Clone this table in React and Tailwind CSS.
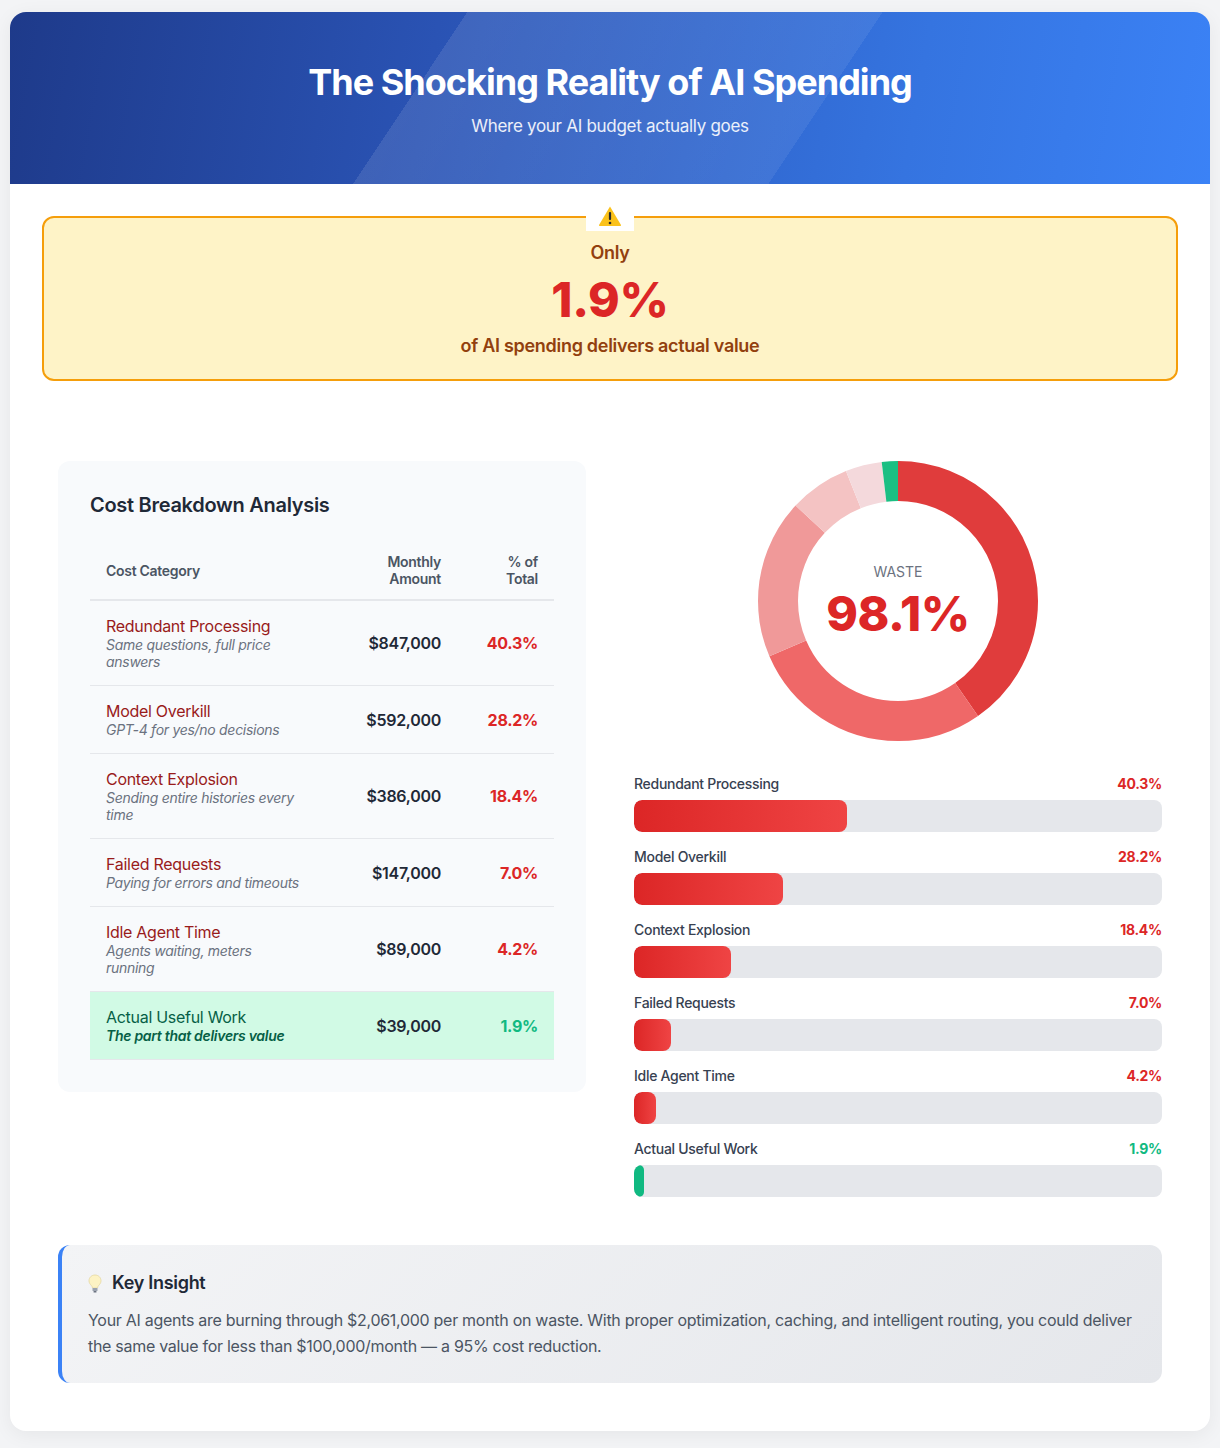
import React from "react";

const rows = [
  { name: "Redundant Processing", desc: "Same questions, full price answers", amount: "$847,000", pct: "40.3%" },
  { name: "Model Overkill", desc: "GPT-4 for yes/no decisions", amount: "$592,000", pct: "28.2%" },
  { name: "Context Explosion", desc: "Sending entire histories every time", amount: "$386,000", pct: "18.4%" },
  { name: "Failed Requests", desc: "Paying for errors and timeouts", amount: "$147,000", pct: "7.0%" },
  { name: "Idle Agent Time", desc: "Agents waiting, meters running", amount: "$89,000", pct: "4.2%" },
];

const bars = [
  { label: "Redundant Processing", value: 40.3 },
  { label: "Model Overkill", value: 28.2 },
  { label: "Context Explosion", value: 18.4 },
  { label: "Failed Requests", value: 7.0 },
  { label: "Idle Agent Time", value: 4.2 },
  { label: "Actual Useful Work", value: 1.9, good: true },
];

const slices = [
  { value: 40.3, color: "#e03c3c" },
  { value: 28.2, color: "#ef6868" },
  { value: 18.4, color: "#f09999" },
  { value: 7.0, color: "#f4c3c3" },
  { value: 4.2, color: "#f4d9dc" },
  { value: 1.9, color: "#1bbf83" },
];

function Donut() {
  const r = 120;
  const c = 2 * Math.PI * r;
  let offset = 0;
  return (
    <div className="relative w-[280px] h-[280px]">
      <svg width="280" height="280" viewBox="0 0 280 280" className="-rotate-90">
        {slices.map((s, i) => {
          const len = (s.value / 100) * c;
          const el = (
            <circle
              key={i}
              cx="140"
              cy="140"
              r={r}
              fill="none"
              stroke={s.color}
              strokeWidth="40"
              strokeDasharray={`${len} ${c - len}`}
              strokeDashoffset={-offset}
            />
          );
          offset += len;
          return el;
        })}
      </svg>
      <div className="absolute inset-0 flex flex-col items-center justify-center">
        <span className="text-sm uppercase text-[#6b7280] leading-5 mt-[2px] tracking-normal">Waste</span>
        <span className="text-5xl font-extrabold text-[#dc2626] leading-[56px] mt-[4px] tracking-[-0.01em]">98.1%</span>
      </div>
    </div>
  );
}

function Warning() {
  return (
    <svg width="24" height="22" viewBox="0 0 24 22">
      <path d="M12 1.5 L23 20 Q23.3 21 22.2 21 L1.8 21 Q0.7 21 1 20 Z" fill="#fbc21a" />
      <rect x="10.9" y="7" width="2.2" height="8" rx="1" fill="#2b2b2b" />
      <circle cx="12" cy="18" r="1.3" fill="#2b2b2b" />
    </svg>
  );
}

function Bulb() {
  return (
    <svg width="14" height="19" viewBox="0 0 14 19">
      <path
        d="M7 1 C3.5 1 1 3.6 1 6.8 C1 9 2.3 10.4 3.4 11.6 C4.2 12.5 4.5 13.3 4.5 14 L9.5 14 C9.5 13.3 9.8 12.5 10.6 11.6 C11.7 10.4 13 9 13 6.8 C13 3.6 10.5 1 7 1 Z"
        fill="#fdf3c4"
        stroke="#e5d7a0"
        strokeWidth="0.8"
      />
      <rect x="4.5" y="14" width="5" height="3" rx="0.6" fill="#9ca3af" />
      <rect x="5.5" y="17" width="3" height="1.4" rx="0.5" fill="#6b7280" />
    </svg>
  );
}

export default function App() {
  return (
    <div className="min-h-screen bg-[#f3f4f6] px-[10px] pt-3 pb-4 font-['Inter',sans-serif] tracking-[-0.018em]">
      <div className="bg-white rounded-2xl shadow-[0_4px_20px_rgba(0,0,0,0.06)] overflow-hidden">
        {/* header */}
        <div className="relative bg-[linear-gradient(100deg,#1e3a8a_0%,#2a53b4_35%,#3574e0_75%,#3b82f6_100%)] pt-12 pb-[46px] text-center text-white">
          <div className="absolute inset-0 bg-[linear-gradient(123.6deg,transparent_34.8%,rgba(255,255,255,0.1)_34.8%,rgba(255,255,255,0.07)_66.4%,transparent_66.4%)]" />
          <h1 className="relative text-4xl font-bold leading-[44px] tracking-[-0.027em]">The Shocking Reality of AI Spending</h1>
          <p className="relative mt-[10px] text-[17px] leading-6 text-white/90">Where your AI budget actually goes</p>
        </div>

        {/* alert */}
        <div className="relative m-8 rounded-xl border-2 border-[#f59e0b] bg-[#fef3c7] pt-[22px] pb-5 text-center">
          <div className="absolute left-1/2 top-[-17px] -translate-x-1/2 bg-white px-3 py-1 flex">
            <Warning />
          </div>
          <p className="text-lg font-semibold leading-[26px] text-[#92400e]">Only</p>
          <p className="mt-[6px] text-5xl font-extrabold leading-[56px] text-[#dc2626]">1.9%</p>
          <p className="mt-[5px] text-lg font-semibold leading-[26px] text-[#92400e]">of AI spending delivers actual value</p>
        </div>

        <div className="px-12 pb-12 pt-[48px]">
          <div className="grid grid-cols-2 gap-12 items-start">
            {/* table card */}
            <div className="rounded-xl bg-[#f8fafc] p-8">
              <h2 className="text-xl font-semibold leading-6 text-[#1f2937] mb-6">Cost Breakdown Analysis</h2>
              <table className="w-full table-fixed border-collapse">
                <colgroup>
                  <col className="w-[227px]" />
                  <col className="w-[140px]" />
                  <col className="w-[97px]" />
                </colgroup>
                <thead>
                  <tr className="border-b-2 border-[#e5e7eb]">
                    <th className="px-4 py-3 text-left text-sm font-semibold leading-[17px] text-[#4b5563]">Cost Category</th>
                    <th className="px-4 py-3 text-right text-sm font-semibold leading-[17px] text-[#4b5563]">Monthly Amount</th>
                    <th className="px-4 py-3 text-right text-sm font-semibold leading-[17px] text-[#4b5563]">% of Total</th>
                  </tr>
                </thead>
                <tbody>
                  {rows.map((r) => (
                    <tr key={r.name} className="border-b border-[#e5e7eb]">
                      <td className="px-4 py-[15.5px] align-middle">
                        <div className="text-base leading-[19px] text-[#991b1b]">{r.name}</div>
                        <div className="text-sm italic leading-[17px] text-[#6b7280]">{r.desc}</div>
                      </td>
                      <td className="px-4 py-[15.5px] text-right text-base font-semibold text-[#1f2937] align-middle">{r.amount}</td>
                      <td className="px-4 py-[15.5px] text-right text-base font-bold text-[#dc2626] align-middle">{r.pct}</td>
                    </tr>
                  ))}
                  <tr className="bg-[#d1fae5] border-b border-[#e5e7eb]">
                    <td className="px-4 py-[15.5px] align-middle">
                      <div className="text-base leading-[19px] text-[#065f46]">Actual Useful Work</div>
                      <div className="text-sm italic font-semibold leading-[17px] text-[#065f46]">The part that delivers value</div>
                    </td>
                    <td className="px-4 py-[15.5px] text-right text-base font-semibold text-[#1f2937] align-middle">$39,000</td>
                    <td className="px-4 py-[15.5px] text-right text-base font-bold text-[#10b981] align-middle">1.9%</td>
                  </tr>
                </tbody>
              </table>
            </div>

            {/* chart column */}
            <div className="flex flex-col">
              <div className="flex justify-center">
                <Donut />
              </div>
              <div className="mt-[33px] flex flex-col gap-[15px]">
                {bars.map((b) => (
                  <div key={b.label}>
                    <div className="flex justify-between text-sm leading-5 mb-1.5">
                      <span className="font-medium text-[#374151]">{b.label}</span>
                      <span className={b.good ? "font-bold text-[#10b981]" : "font-bold text-[#dc2626]"}>
                        {b.value.toFixed(1)}%
                      </span>
                    </div>
                    <div className="h-8 rounded-lg bg-[#e5e7eb] overflow-hidden">
                      <div
                        className={
                          b.good
                            ? "h-full rounded-lg bg-[#10b981]"
                            : "h-full rounded-lg bg-[linear-gradient(90deg,#dc2626,#ef4444)]"
                        }
                        style={{ width: `${b.value}%` }}
                      />
                    </div>
                  </div>
                ))}
              </div>
            </div>
          </div>

          {/* insight */}
          <div className="mt-12 rounded-xl border-l-4 border-[#3b82f6] bg-[linear-gradient(135deg,#f3f4f6,#e5e7eb)] px-[26px] pt-[26px] pb-6">
            <div className="flex items-center gap-[10px] text-lg font-semibold leading-6 text-[#1f2937]">
              <Bulb />
              <span>Key Insight</span>
            </div>
            <p className="mt-3 text-base leading-[26px] text-[#4b5563]">
              Your AI agents are burning through $2,061,000 per month on waste. With proper optimization, caching, and intelligent routing, you could deliver the same value for less than $100,000/month — a 95% cost reduction.
            </p>
          </div>
        </div>
      </div>
    </div>
  );
}
